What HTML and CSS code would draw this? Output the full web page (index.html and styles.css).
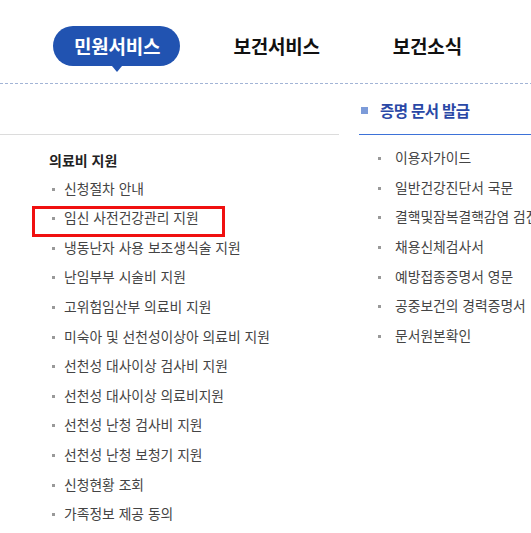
FILE: index.html
```html
<!DOCTYPE html>
<html lang="ko">
<head>
<meta charset="utf-8">
<link rel="stylesheet" href="styles.css">
</head>
<body>
<nav class="gnb">
  <a class="gnb-item active">민원서비스</a>
  <a class="gnb-item">보건서비스</a>
  <a class="gnb-item">보건소식</a>
</nav>
<div class="content">
  <section class="col-left">
    <div class="col-head"></div>
    <h3 class="group-title">의료비 지원</h3>
    <ul class="menu">
      <li>신청절차 안내</li>
      <li class="marked">임신 사전건강관리 지원<span class="highlight"></span></li>
      <li>냉동난자 사용 보조생식술 지원</li>
      <li>난임부부 시술비 지원</li>
      <li>고위험임산부 의료비 지원</li>
      <li>미숙아 및 선천성이상아 의료비 지원</li>
      <li>선천성 대사이상 검사비 지원</li>
      <li>선천성 대사이상 의료비지원</li>
      <li>선천성 난청 검사비 지원</li>
      <li>선천성 난청 보청기 지원</li>
      <li>신청현황 조회</li>
      <li>가족정보 제공 동의</li>
    </ul>
  </section>
  <section class="col-right">
    <div class="col-head blue"><span class="sq"></span>증명 문서 발급</div>
    <ul class="menu right">
      <li>이용자가이드</li>
      <li>일반건강진단서 국문</li>
      <li>결핵및잠복결핵감염 검진</li>
      <li>채용신체검사서</li>
      <li>예방접종증명서 영문</li>
      <li>공중보건의 경력증명서</li>
      <li>문서원본확인</li>
    </ul>
  </section>
</div>
</body>
</html>
```
FILE: styles.css
```css
html, body {
  margin: 0;
  padding: 0;
  background: #fff;
  overflow: hidden;
}
body {
  font-family: "Noto Sans CJK KR", "Noto Sans", sans-serif;
  color: #444;
  width: 531px;
}
.gnb {
  display: flex;
  align-items: flex-start;
  gap: 32px;
  padding: 26px 0 1px 53px;
  height: 57px;
  box-sizing: content-box;
  background-image: repeating-linear-gradient(90deg, #a2b4d6 0 3px, transparent 3px 5px);
  background-size: 100% 1px;
  background-position: 0 100%;
  background-repeat: no-repeat;
}
.gnb-item {
  position: relative;
  display: block;
  height: 40px;
  line-height: 40px;
  padding: 0 20px 0 21px;
  font-size: 19px;
  font-weight: 700;
  color: #111;
  border-radius: 20px;
  letter-spacing: -0.2px;
}
.gnb-item.active {
  background: #2153b1;
  color: #fff;
}
.gnb-item.active::after {
  content: "";
  position: absolute;
  left: 50%;
  bottom: -6px;
  margin-left: -5px;
  border-left: 5px solid transparent;
  border-right: 5px solid transparent;
  border-top: 6px solid #2153b1;
}
.content {
  display: grid;
  grid-template-columns: 339px 172px;
  column-gap: 20px;
}
.col-right {
  overflow: hidden;
}
.col-head {
  height: 50px;
  border-bottom: 1px solid #dcdcdc;
}
.col-head.blue {
  border-bottom-color: #3d72d8;
  display: flex;
  align-items: center;
  padding-top: 2px;
  height: 48px;
  font-size: 15.5px;
  font-weight: 700;
  color: #2a48a6;
  letter-spacing: -0.6px;
  white-space: nowrap;
}
.sq {
  width: 7px;
  height: 7px;
  background: #7c9bd9;
  margin: 0 12px 0 2px;
}
.group-title {
  margin: 15px 0 0 49px;
  font-size: 14px;
  font-weight: 700;
  line-height: 20px;
  color: #222;
}
.menu {
  list-style: none;
  margin: 3.7px 0 0 0;
  padding: 0 0 0 52px;
}
.menu li {
  position: relative;
  padding-left: 12px;
  font-size: 13.8px;
  line-height: 29.6px;
  height: 29.6px;
  color: #444;
  white-space: nowrap;
}
.menu li::before {
  content: "";
  position: absolute;
  left: 0;
  top: 14px;
  width: 3px;
  height: 3px;
  background: #999;
}
.menu.right {
  margin-top: 8.2px;
  padding-left: 19px;
}
.menu.right li {
  padding-left: 17px;
}
.highlight {
  position: absolute;
  left: -20px;
  top: 3px;
  width: 193px;
  height: 31px;
  border: 3px solid #f01010;
  box-sizing: border-box;
}
```
